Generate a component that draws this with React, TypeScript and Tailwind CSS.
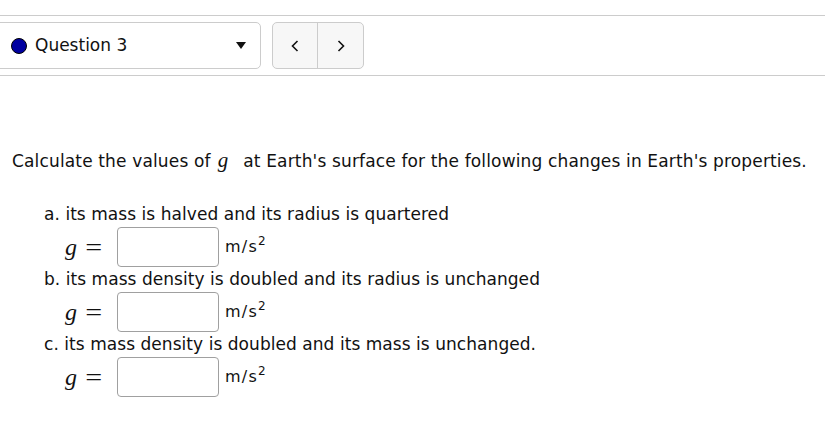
import React from "react";

const font = { fontFamily: '"DejaVu Sans", Verdana, sans-serif' };

function G() {
  return (
    <span className="italic text-[21px] ml-[7px] mr-[15px]" style={{ fontFamily: '"Liberation Serif", "DejaVu Serif", serif' }}>
      g
    </span>
  );
}

function Answer() {
  return (
    <div className="flex items-center h-[40px] pl-[65px]">
      <span className="w-[52px] flex items-center gap-[10px]" style={{ fontFamily: '"Liberation Serif", serif' }}>
        <span className="italic text-[24px] leading-none">g</span>
        <span className="text-[24px] leading-none scale-x-125 inline-block">=</span>
      </span>
      <div className="w-[102px] h-[40px] border border-[#a0a0a0] rounded-[4px] bg-white" />
      <span className="ml-[6px] text-[16px] tracking-[1.2px] text-[#111]">
        m/s<span className="text-[12px] relative -top-[7px]">2</span>
      </span>
    </div>
  );
}

export default function App() {
  return (
    <div className="w-[825px] h-[421px] bg-white overflow-hidden text-[#111]" style={font}>
      <div className="h-[15px]" />
      <div className="border-t border-[#cccccc]">
        <div className="flex items-start h-[59px] pt-[6px]">
          <div className="ml-[-10px] w-[271px] h-[47px] border border-[#cccccc] rounded-[5px] flex items-center pl-[20px] pr-[14px] bg-white">
            <span className="w-[16px] h-[16px] rounded-full bg-[#0000a0] border-[1.5px] border-black" />
            <span className="ml-[8px] text-[17px]">Question 3</span>
            <span className="ml-auto">
              <svg width="10" height="7" viewBox="0 0 10 7"><path d="M0 0H10L5 7Z" fill="#111" /></svg>
            </span>
          </div>
          <div className="ml-[11px] flex h-[47px] border border-[#cccccc] rounded-[5px] bg-[#f7f7f7]">
            <button className="w-[45px] flex items-center justify-center border-r border-[#cccccc]">
              <svg width="8" height="12" viewBox="0 0 8 12"><path d="M6.5 1L1.5 6L6.5 11" fill="none" stroke="#111" strokeWidth="1.6" /></svg>
            </button>
            <button className="w-[45px] flex items-center justify-center">
              <svg width="8" height="12" viewBox="0 0 8 12"><path d="M1.5 1L6.5 6L1.5 11" fill="none" stroke="#111" strokeWidth="1.6" /></svg>
            </button>
          </div>
        </div>
      </div>
      <div className="border-t border-[#cccccc]" />
      <div className="pl-[12px] pt-[72px] text-[17px] leading-[24px] tracking-[0.15px]">
        Calculate the values of<G />at Earth's surface for the following changes in Earth's properties.
      </div>
      <div className="mt-[29px] text-[17px] tracking-[0.05px]">
        <div className="pl-[44px] leading-[25px]">a. its mass is halved and its radius is quartered</div>
        <Answer />
        <div className="pl-[44px] leading-[25px]">b. its mass density is doubled and its radius is unchanged</div>
        <Answer />
        <div className="pl-[44px] leading-[25px]">c. its mass density is doubled and its mass is unchanged.</div>
        <Answer />
      </div>
    </div>
  );
}
